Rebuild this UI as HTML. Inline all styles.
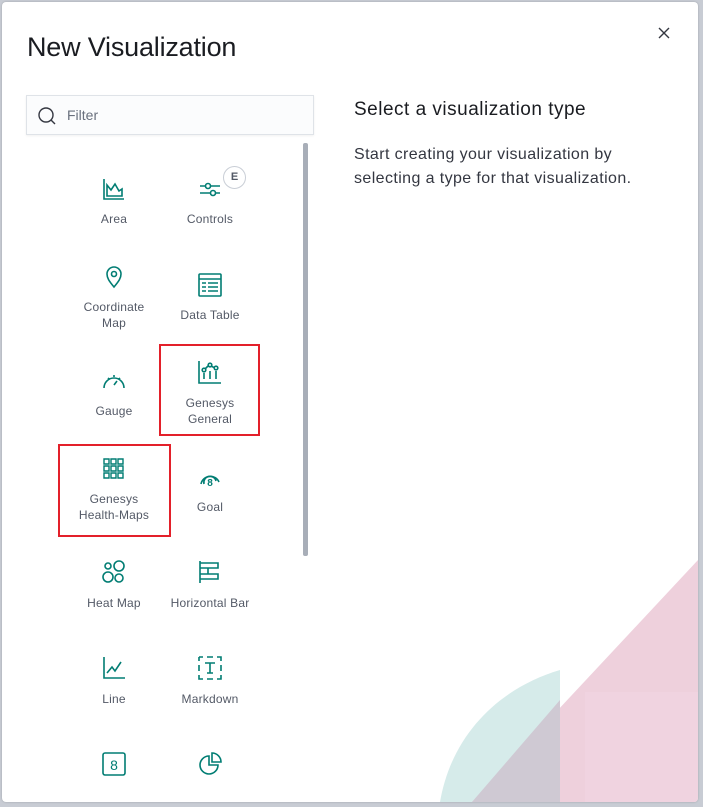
<!DOCTYPE html>
<html><head><meta charset="utf-8"><style>
*{margin:0;padding:0;box-sizing:border-box}
body{width:703px;height:807px;background:#c8ccd4;position:relative;overflow:hidden;font-family:"Liberation Sans",sans-serif}
.modal{position:absolute;left:2px;top:2px;width:696px;height:800px;background:#fff;border-radius:4px;overflow:hidden;box-shadow:0 0 2px rgba(0,0,0,.2)}
.abs{position:absolute}
h1{position:absolute;left:25px;top:30px;font-weight:300;font-size:27px;color:#1a1c21;letter-spacing:-.2px}
.filter{position:absolute;left:24px;top:93px;width:288px;height:40px;background:#fbfcfd;border:1px solid #dfe3e8;box-shadow:0 1px 2px rgba(0,0,0,.06)}
.filter span{position:absolute;left:40px;top:11px;font-size:14px;color:#69707d}
.lbl{position:absolute;width:100px;text-align:center;font-size:12px;line-height:16px;color:#535966;letter-spacing:.2px}
svg.i{position:absolute;width:26px;height:26px;fill:none;stroke:#017d73;stroke-width:1.6}
.box{position:absolute;border:2px solid #e3202a}
</style></head><body>
<div class="modal">
<h1>New Visualization</h1>
<svg class="abs" style="left:655px;top:24px" width="14" height="14" viewBox="0 0 14 14"><path d="M2 2L12 12M12 2L2 12" stroke="#343741" stroke-width="1.4"/></svg>
<div class="filter"><svg class="abs" style="left:10px;top:9px" width="22" height="22" viewBox="0 0 22 22"><circle cx="9" cy="10" r="7" fill="none" stroke="#343741" stroke-width="1.4"/><path d="M14 15l4 4" stroke="#343741" stroke-width="1.4"/></svg><span>Filter</span></div>
<div class="abs" style="left:301px;top:141px;width:5px;height:413px;background:#a8aeb8;border-radius:2px"></div>
<div class="abs" style="left:352px;top:97px;font-size:19px;letter-spacing:.5px;color:#1a1c21">Select a visualization type</div>
<div class="abs" style="left:352px;top:141px;font-size:16px;letter-spacing:.4px;line-height:24px;color:#343741">Start creating your visualization by<br>selecting a type for that visualization.</div>
<svg class="abs" style="left:0;top:0" width="696" height="800">
<path d="M438 800 C450 730 500 685 558 668 L558 800Z" fill="#d6ebea"/>
<path d="M696 558 L696 800 L470 800Z" fill="#eed0dc"/>
<path d="M558 698 L558 800 L470 800Z" fill="#cfc9d3"/>
<rect x="583" y="690" width="113" height="110" fill="#f2d5e2" opacity=".6"/>
</svg>
<svg class="i" style="left:99px;top:174px" viewBox="0 0 26 26"><path d="M3 3V23H23M6 20V9l4 5 4-6 4 7 3-2v7Z"/></svg>
<div class="lbl" style="left:62px;top:209px">Area</div>
<svg class="i" style="left:195px;top:174px" viewBox="0 0 26 26"><path d="M3 10H23M3 17H23"/><circle cx="11" cy="10" r="2.5" fill="#fff"/><circle cx="16" cy="17" r="2.5" fill="#fff"/></svg>
<div class="abs" style="left:221px;top:164px;width:23px;height:23px;border:1px solid #c9ced6;border-radius:50%;background:#fff;text-align:center;font-size:11px;font-weight:bold;line-height:21px;color:#535966">E</div>
<div class="lbl" style="left:158px;top:209px">Controls</div>
<svg class="i" style="left:99px;top:262px" viewBox="0 0 26 26"><path d="M13 23C8 17 6 14 6 10a7 7 0 0 1 14 0c0 4-2 7-7 13Z"/><circle cx="13" cy="10" r="2.5"/></svg>
<div class="lbl" style="left:62px;top:297px">Coordinate<br>Map</div>
<svg class="i" style="left:195px;top:270px" viewBox="0 0 26 26"><rect x="2" y="2" width="22" height="22" rx="1"/><path d="M2 7H24M5 11H9M11 11H21M5 15H9M11 15H21M5 19H9M11 19H21"/></svg>
<div class="lbl" style="left:158px;top:305px">Data Table</div>
<svg class="i" style="left:99px;top:366px" viewBox="0 0 26 26"><path d="M3 20A10 10 0 0 1 23 20M13 7V9M7 10l1.4 1.4M19 10l-1.4 1.4M13 17l3-4"/></svg>
<div class="lbl" style="left:62px;top:401px">Gauge</div>
<svg class="i" style="left:195px;top:358px" viewBox="0 0 26 26"><path d="M2 1V23H24M7 19V13M13 19V11M19 19V11M7 10l5-5 6 3"/><circle cx="7" cy="10" r="1.8" fill="#fff"/><circle cx="13" cy="5" r="1.8" fill="#fff"/><circle cx="19" cy="8" r="1.8" fill="#fff"/></svg>
<div class="box" style="left:157px;top:342px;width:101px;height:92px"></div>
<div class="lbl" style="left:158px;top:393px">Genesys<br>General</div>
<svg class="i" style="left:99px;top:454px" viewBox="0 0 26 26"><path d="M3 3h5v5H3zM10 3h5v5h-5zM17 3h5v5h-5zM3 10h5v5H3zM10 10h5v5h-5zM17 10h5v5h-5zM3 17h5v5H3zM10 17h5v5h-5zM17 17h5v5h-5z" stroke-width="1.4"/></svg>
<div class="box" style="left:56px;top:442px;width:113px;height:93px"></div>
<div class="lbl" style="left:62px;top:489px">Genesys<br>Health-Maps</div>
<svg class="i" style="left:195px;top:462px" viewBox="0 0 26 26"><path d="M4 20A9.5 9.5 0 0 1 22 18"/><path d="M7 20A6 6 0 0 1 19 17"/><text x="13" y="22" font-size="10" font-weight="bold" text-anchor="middle" fill="#017d73" stroke="none" font-family="Liberation Sans">8</text></svg>
<div class="lbl" style="left:158px;top:497px">Goal</div>
<svg class="i" style="left:99px;top:557px" viewBox="0 0 26 26"><circle cx="7" cy="7" r="3"/><circle cx="18" cy="7" r="5"/><circle cx="7" cy="18" r="5"/><circle cx="18" cy="19" r="4"/></svg>
<div class="lbl" style="left:62px;top:593px">Heat Map</div>
<svg class="i" style="left:195px;top:557px" viewBox="0 0 26 26"><path d="M3 2V24M3 4H21V9H3M3 9H11V15H3M3 15H21V20H3"/></svg>
<div class="lbl" style="left:158px;top:593px">Horizontal Bar</div>
<svg class="i" style="left:99px;top:653px" viewBox="0 0 26 26"><path d="M3 2V23H24M6 18l5-6 3 4 6-9"/></svg>
<div class="lbl" style="left:62px;top:689px">Line</div>
<svg class="i" style="left:195px;top:653px" viewBox="0 0 26 26"><path d="M2 2h4M10 2h6M20 2h4v4M24 10v6M24 20v4h-4M16 24h-6M6 24H2v-4M2 16v-6M2 6V2M8 8h10M13 8v10M10 18h6"/></svg>
<div class="lbl" style="left:158px;top:689px">Markdown</div>
<svg class="i" style="left:99px;top:749px" viewBox="0 0 26 26"><rect x="2" y="2" width="22" height="22" rx="2"/><text x="13" y="19" font-size="14" text-anchor="middle" fill="#017d73" stroke="none" font-family="Liberation Sans">8</text></svg>
<svg class="i" style="left:195px;top:749px" viewBox="0 0 26 26"><path d="M12 5A9 9 0 1 0 21 14H12Z"/><path d="M15 2A9 9 0 0 1 24 11H15Z"/></svg>
</div>
</body></html>
